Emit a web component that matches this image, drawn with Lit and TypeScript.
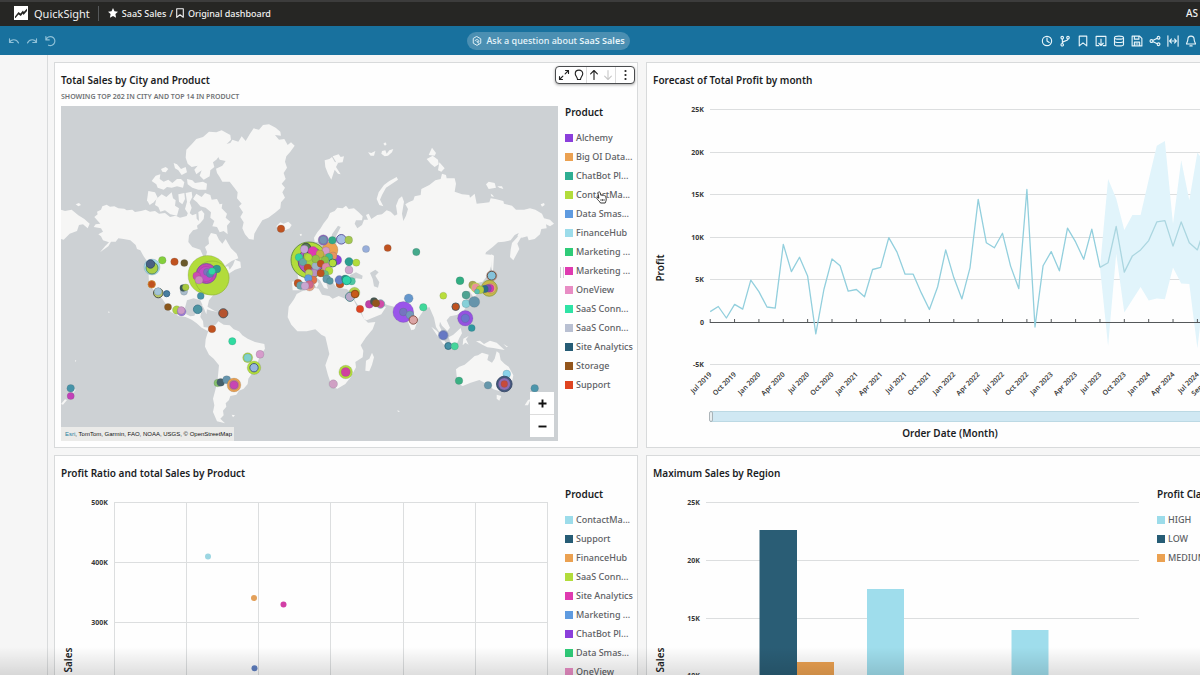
import { LitElement, html, svg, css } from "lit";
import { customElement, property } from "lit/decorators.js";

type LegendItem = [string, string];
type Dot = [number, number, number, string, string?];

const C = {
  purple: "#8b3fdb", orange: "#eba151", teal: "#2fae92", lime: "#b2dc3b", blue: "#5f9be0",
  sky: "#9cdcea", green: "#2fcb78", magenta: "#df3bb0", pink: "#e88dc4", mint: "#2fe3a5",
  grey: "#b9c0d2", navy: "#265c75", brown: "#93551b", red: "#df4420",
};

const PRODUCTS: LegendItem[] = [
  ["Alchemy", C.purple], ["Big OI Data...", C.orange], ["ChatBot Pl...", C.teal],
  ["ContactMa...", C.lime], ["Data Smas...", C.blue], ["FinanceHub", C.sky],
  ["Marketing ...", C.green], ["Marketing ...", C.magenta], ["OneView", C.pink],
  ["SaaS Conn...", C.mint], ["SaaS Conn...", C.grey], ["Site Analytics", C.navy],
  ["Storage", C.brown], ["Support", C.red],
];

const RATIO: LegendItem[] = [
  ["ContactMa...", C.sky], ["Support", C.navy], ["FinanceHub", C.orange],
  ["SaaS Conn...", C.lime], ["Site Analytics", C.magenta], ["Marketing ...", C.blue],
  ["ChatBot Pl...", C.purple], ["Data Smas...", C.green], ["OneView", C.pink],
];

const CLASSES: LegendItem[] = [["HIGH", C.sky], ["LOW", C.navy], ["MEDIUM", C.orange]];

const PROFIT = [
  1.3, 1.9, 0.55, 2.15, 1.6, 5, 3.65, 1.85, 1.7, 9.2, 6, 7.7, 5.5, -1.3, 3.9, 7.5, 6.7, 3.7, 3.9,
  3.05, 6.25, 6.5, 10, 8.3, 5.7, 5.7, 3.5, 1.55, 4.2, 8.55, 5.3, 2.8, 6.45, 14.5, 9.4, 8.8, 10.5,
  6.65, 4, 15.65, -0.5, 6.7, 8.35, 6.1, 11.1, 9.5, 7.45, 11, 6.5,
];
const FORECAST = [6.5, 7.05, 11.3, 5.95, 7.85, 8.55, 9.65, 11.85, 12, 9, 11.85, 9.4, 8.55, 11.5];
const UPPER = [6.5, 16.9, 14.6, 10.9, 12.65, 12.65, 16.8, 20.8, 21.35, 11.6, 19.1, 14.4, 20, 18.6];
const LOWER = [6.5, -2.75, 8.1, 1.2, 2.7, 4.2, 2.6, 2.85, 2.75, 6.5, 4.6, 4.55, -3, 5];

const RUST = "#c0521f";
const DOTS: Dot[] = [
  [152, 267, 8, "#a5dcec"], [152, 268, 6, "#a9cf45", "#4a7a60"], [150.5, 264, 4.2, "#4a6184", "#2f4565"],
  [162.3, 260.3, 3.8, "#84cf3c"], [174.5, 261.7, 3.8, RUST], [184.3, 263, 3.6, "#6b5a2a"],
  [207.5, 275, 19.5, "#b2dc3b"], [212, 278, 17, "#b2dc3b", "#95bb35"], [206.5, 273.5, 10, "#c445b4", "#6d4fa0"],
  [206, 274, 7.5, "#c34bc4"], [196.8, 276, 4, "#cc4db0"], [199, 280, 4, "#cf86c0"],
  [207, 272, 3.6, "#7d6fc0"], [210, 274, 3.6, "#4f8bb0"], [216.8, 269, 4, "#2f9a8c"], [212, 271.2, 3.5, "#2fd7a5"],
  [281, 228.7, 3.8, RUST], [151.7, 284.3, 3.7, RUST, "#c98a30"], [158.3, 293, 4.8, "#b8c96a", "#333"],
  [158, 291.5, 3.8, "#a3c4d8"], [166.7, 293.7, 3.1, "#4a7fa0", "#2f5d80"], [168, 307, 3.6, "#8a571c"],
  [176.7, 310, 4.2, "#b0d443"], [181.6, 311.6, 4.4, "#9a78d8"], [181.2, 310.4, 3.8, "#cd9ac8"],
  [184, 291.6, 3.6, "#a9bccb"], [183.2, 288, 3.4, "#3b5955"], [185.7, 287.3, 3.4, "#a7c93c"],
  [200.7, 296, 3.5, "#4593a8"], [197.7, 309.3, 4.3, "#4e95a3", "#38748a"], [223.3, 313.3, 4.6, "#b5532f", "#3e4c55"],
  [212, 329, 3.8, RUST], [232.3, 341.3, 3.7, "#2fdba0"], [260, 354.3, 4, "#d69bcb"],
  [247.7, 357.7, 5, "#b2dc3b"], [247.7, 357.7, 4, "#7fd0cc"], [254, 367.7, 6.8, "#b2dc3b"],
  [254, 367.7, 4.2, "#98b6e0", "#334b70"], [217.7, 383, 3.8, "#86c06b"], [220.7, 382.3, 3.9, "#45606b"],
  [226.7, 379.7, 4, "#6795ad"], [234, 385, 6.9, "#eba151"], [234, 385, 5, "#c88a90"], [234, 385, 4, "#c845b4"],
  [70.7, 388.3, 3.8, "#4693a8"], [70.7, 396, 3.6, "#c240b8"],
  [309, 260, 18, "#b2dc3b", "#55803c"], [311, 261, 13, "#b65ac0", "#4c4f66"], [313, 258, 10, "#a6d13f", "#557"],
  [330, 250, 8, "#eba151"], [306, 248, 4.8, "#557a55", "#334"], [304.3, 249.3, 4, "#c6a5d8"],
  [313, 251.5, 5, "#df3bb0"], [299, 257.3, 3.8, "#2fd3a0"], [303, 262, 3.8, "#64a9a5"], [316, 266, 4.2, "#9fb2c6"],
  [336.7, 260, 5, "#8b3fdb"], [333, 256, 4, "#e79460"], [326, 250.7, 3.8, "#d59bc9"], [320, 254, 4, "#c3b244"],
  [329, 257, 3.8, "#3dbd94"], [325, 260, 3.8, "#8bbf45"], [315.7, 259, 4, "#93c047"], [332.7, 263, 4, "#b2dc3b", "#2f5a66"],
  [308.3, 257.3, 3.8, "#b2dc3b"], [320.7, 263.7, 3.6, RUST], [307.7, 267.7, 3.8, RUST], [326, 267, 4, "#e08aa8"],
  [314, 273, 3.8, "#b792c0"], [309, 273, 3.8, "#bad25a"], [329, 270.7, 4, "#b2dc3b"], [325, 274, 3.6, "#6aba80"],
  [320.7, 273.3, 3.7, RUST], [313, 280, 4, "#df704a"], [308.3, 278.3, 3.8, "#5f9be0"], [298, 283.2, 4, RUST],
  [300.5, 285.5, 4, "#68a2a8"], [309.5, 286, 5, "#eba080"], [309.5, 284.6, 4, "#d0668a"], [305, 286, 4, "#c9a5d0"],
  [326.7, 279, 4, "#6499ac"], [330, 281, 3.4, "#5698a3"], [340, 284, 4, RUST], [339.3, 280, 4.4, "#687ec5"],
  [345, 278.5, 3.6, "#2a8d80"], [351.7, 281.3, 3.7, "#4fc7a2"], [346.7, 280.3, 4.4, "#2fd5aa", "#1c8f7f"],
  [323.3, 240, 5.2, "#9067c0"], [323.3, 240, 4, "#7694b3"], [332.3, 240.3, 3.8, "#31aa85"],
  [341.3, 239.3, 4.8, "#a7bfe4", "#4a3d90"], [348.7, 240, 3.9, "#a5c850"], [366, 249, 3.6, "#98aeda"],
  [387.7, 248, 3.6, RUST], [416.3, 252, 3.7, "#45aa8c"], [349, 261.7, 4.2, "#2a9d8f"], [356.3, 262.7, 3.6, "#b2dc3b"],
  [349, 270, 4, "#cfa6cc"], [354.5, 292.6, 5.4, "#b2d04a"], [350, 296.8, 4.6, "#b9a9c8", "#3d8080"],
  [355, 294, 3.8, "#c85a1a", "#804010"], [360, 309, 3.8, "#df4420"], [380.5, 304, 4.2, "#d04ba8", "#7aa"],
  [369.3, 304.3, 4, "#c040a8"], [374, 301.4, 3.8, "#46564f"], [376, 303.3, 3.8, "#93551b"],
  [403.3, 312, 10.4, "#9a55ea"], [403.3, 312, 3.9, "#7674bf"], [410, 315, 4, "#7398bb"], [408.7, 298.3, 4.4, "#6597cc"],
  [413.3, 320, 4.2, "#dba5a5", "#7b4033"], [423.3, 307.3, 3.8, "#40d89a"], [443.3, 295.7, 3.5, "#b9de3c"],
  [460, 280.7, 4, "#31ae82"], [491.7, 275.7, 5.3, "#e3a58a"], [491.7, 275.7, 4.4, "#85c2da", "#4a3b33"],
  [472.7, 285, 4, "#a8a850"], [475.8, 287.7, 4.6, "#e8939a", "#b2dc3b"], [489.3, 288.3, 8, "#c9b84a", "#8a9a3c"],
  [491, 288.3, 5, "#e8a870"], [490, 288.3, 4, "#d436b0"], [487.6, 288.3, 3.8, "#7d4bb8"], [484.6, 289, 3.8, "#2b6c86"],
  [480, 289.8, 4, "#b5cf42"], [477, 291.5, 2.6, "#57c0b0"], [466, 295, 4, "#4fa392"], [466, 303.7, 4, "#86d0d8"],
  [474.3, 301.9, 5.4, "#6694ab"], [455.7, 306.7, 3.8, RUST, "#3d5560"], [465.3, 318.3, 7.7, "#9552e0"],
  [465.3, 318.3, 4.2, "#6c74cc"], [471.7, 328, 3.5, "#2f97a0"], [443.3, 335.3, 5, "#93a2d2"],
  [443.3, 335.3, 4.2, "#6678c4"], [448.3, 346, 3.5, "#458fa5", "#2a6478"], [454.7, 346.3, 3.7, "#45d59b"],
  [345.7, 372, 6.8, "#b2dc3b"], [345.7, 372, 4.6, "#d0419f"], [333.3, 384, 4.2, "#d0a0c4"],
  [459, 380.7, 3.8, "#3ab083"], [488, 385.3, 3.8, "#6697ab"], [506.7, 374, 3.9, "#8ad2ea"],
  [504.3, 384, 7.8, "#44587f", "#2f4060"], [504.3, 384, 6, "#8d6cb4"], [504.3, 384, 3.4, "#c84a3c"],
  [534.7, 388.3, 3.8, "#4c95ab"],
];

/* Coastlines, grouped by map quarter; each quarter is shifted by its own translate. */
const LAND_NW = [
  "M118 350L128 342 126 334 138 328 142 318 155 313 165 319 178 318 190 324 208 325 215 330 232 328 240 335 258 332 272 328 285 334 300 332 312 340 330 338 345 350 362 346 375 352 395 347 400 335 412 345 424 340 425 355 432 362 430 335 440 330 448 340 446 356 436 368 426 376 428 386 414 390 402 405 400 425 412 440 436 448 444 466 453 467 456 455 450 440 462 430 460 412 468 398 484 402 492 418 502 430 512 416 520 430 528 444 545 460 550 474 530 482 516 492 506 500 520 498 524 508 534 494 540 478 556 484 558 502 540 508 528 516 500 535 482 575 462 600 456 625 454 642 446 622 436 600 416 594 396 600 390 622 394 642 406 648 418 646 424 632 440 630 436 650 444 662 446 680 462 682 458 692 440 682 424 668 410 658 392 650 372 648 346 634 332 610 322 596 306 580 290 562 282 545 280 510 290 508 284 494 266 468 256 450 246 446 242 434 226 420 206 416 190 414 182 424 168 424 160 438 135 456 150 438 162 426 144 420 138 408 130 402 144 394 138 384 116 380 122 372 136 370z",
  "M18 328L30 332 50 328 70 345 88 356 104 370 98 384 84 372 72 374 66 392 44 400 26 418 18 416z",
  "M62 312L72 308 78 314 70 318z",
  "M483 205L502 196 512 182 494 178 488 166 498 158 510 132 526 128 532 118 550 124 560 108 572 122 584 102 596 84 612 88 624 74 642 72 662 82 676 94 678 106 660 104 672 118 688 116 698 134 708 126 719 136 706 154 694 168 690 184 696 202 686 218 692 236 680 250 690 262 682 276 690 292 678 306 676 324 662 336 640 352 622 360 608 382 598 400 596 418 582 416 570 402 562 384 566 366 556 350 564 336 552 318 560 310 546 294 548 276 538 262 524 244 502 244 494 230 486 218z",
  "M392 172L394 148 410 132 424 116 444 110 462 94 484 96 500 90 526 104 528 118 512 134 516 146 498 160 484 178 474 186 478 200 466 210 464 228 446 238 434 226 440 210 424 222 418 208 428 196 410 200 398 190z",
  "M290 242L302 226 316 222 314 236 326 244 340 238 352 248 366 236 378 236 388 246 384 262 366 258 350 262 336 260 326 268 308 262 304 252z",
  "M356 188L366 192 378 206 392 200 396 216 380 224 370 210 360 204z",
  "M318 206L332 200 340 206 332 216 322 214z",
  "M280 272L300 276 308 292 296 306 284 314 276 300z",
  "M304 296L320 282 334 290 350 276 354 294 362 300 360 316 372 324 366 346 346 342 330 330 316 334 310 320 300 314z",
  "M370 282L388 278 390 296 382 312 372 304z",
  "M392 278L410 274 412 290 404 306 410 322 402 344 390 326 396 304z",
  "M396 236L412 240 420 248 444 244 456 250 454 268 430 268 412 262 398 252z",
  "M414 296L424 280 440 290 450 278 466 284 470 298 486 296 494 312 502 310 500 324 516 340 512 352 526 364 516 376 518 402 506 392 494 396 486 380 472 378 478 362 466 352 468 336 452 322 436 318 426 306z",
  "M664 378L676 366 686 370 700 364 710 374 704 384 690 390 674 388z",
  "M734 402l5 -2 2 5 -5 2z",
];
const LAND_NE = [
  "M42 412L52 396 62 384 70 370 84 352 90 338 104 332 112 322 128 324 138 316 146 326 162 324 176 336 188 348 186 360 168 360 164 370 172 384 186 374 192 358 204 358 198 344 206 340 214 356 232 344 246 342 260 330 272 334 284 346 292 342 288 316 296 296 306 288 312 304 306 340 310 362 318 346 324 326 316 312 326 306 340 300 344 288 362 284 364 266 388 254 406 240 422 236 426 220 438 224 440 234 464 234 468 250 464 274 486 282 508 284 510 292 524 280 530 310 550 308 568 306 572 294 586 296 610 302 612 310 636 316 648 328 672 328 690 324 706 328 726 340 732 354 750 358 762 370 750 378 738 372 740 384 724 386 720 402 704 416 686 420 682 408 666 412 652 408 656 398 644 404 632 420 612 424 594 426 578 440 558 456 556 462 578 464 574 494 566 520 548 544 532 548 520 560 530 584 520 590 508 572 494 572 486 582 496 594 504 612 490 632 470 644 450 648 440 660 450 682 442 692 426 676 420 664 418 676 432 706 426 708 408 680 402 652 388 620 372 628 356 652 344 686 334 690 322 660 312 632 294 622 262 614 240 604 250 616 258 620 244 642 200 660 192 656 180 624 160 594 158 580 140 566 110 562 96 542 76 538 84 566 72 562 60 540 40 524 56 550 50 562 34 544 22 546 0 570 -22 570 -24 544 -4 540 -8 520 0 504 20 488 36 478 48 462 46 448 56 446 72 458 96 454 100 440 112 426 130 424 140 414 116 418 108 408 122 380 114 376 96 402 92 424 80 440 72 440 64 424 44 424z",
  "M230 296L236 276 252 254 268 242 290 230 294 238 276 250 258 262 246 284 240 298 250 318 238 314z",
  "M74 180L88 176 96 170 104 184 114 188 108 200 122 222 114 220 104 208 94 238 84 220 76 200zM98 168L116 162 122 170 132 168 128 186 110 188z",
  "M204 156L214 158 226 152 222 166 212 166zM246 152L256 150 260 160 268 150 280 146 276 156 264 166 254 168 244 160zM250 130l6 -4 4 6 -5 4z",
  "M386 164L396 142 408 158 404 166zM380 176L398 166 414 178 416 192 404 200 392 190zM418 186L434 204 424 214 414 210z",
  "M558 252L566 244 584 248 588 262 566 266zM592 258L606 258 610 266 598 262zM572 280l6 4 4 6 -8 -2zM722 312l10 -4 2 6 -8 5z",
  "M636 428L658 404 664 410 652 430 658 446 640 480 630 470 632 448z",
  "M574 462L582 466 580 500 578 520 574 500z",
];
const SEA_NE = [
  "M150 524L168 516 188 526 186 536 168 534 158 544 148 540z",
  "M210 518L226 508 236 516 226 526 238 546 234 562 222 558 218 536z",
];
const LAND_SW = [
  "M452 222L460 196 470 180 482 178 490 168 506 178 524 180 536 192 552 198 562 210 578 220 600 230 628 236 630 250 616 270 608 290 606 314 590 326 580 340 578 356 566 370 552 376 544 388 526 392 522 404 512 414 514 424 504 436 506 450 496 460 510 474 486 468 474 440 478 420 474 400 482 370 488 340 492 300 476 280 462 268 450 244z",
  "M440 120L454 122 478 136 490 140 470 136 450 130zM494 140L510 142 512 150 496 150z",
  "M18 416L30 402 36 404 24 418zM56 366l6 8 -8 10 -2 -8zM530 448l10 2 -6 6z",
  "M60 284l4 2 -3 4zM160 138l5 3 -5 2z",
];
const LAND_SE = [
  "M6 78L-10 86 -18 102 -34 124 -37 156 -26 178 -8 198 20 198 46 192 64 208 76 214 82 240 88 266 76 300 84 330 96 364 112 370 136 356 152 336 168 306 166 290 188 276 190 256 182 240 198 216 218 192 226 170 204 172 192 160 182 144 170 122 158 98 136 100 116 92 98 100 88 92 66 88 56 70 34 66 18 74z",
  "M198 286L208 280 216 262 222 276 216 298 208 318 196 316z",
  "M468 312L470 332 476 356 488 362 512 352 538 344 556 354 568 362 580 372 600 378 616 370 636 350 640 330 626 304 614 296 602 284 598 264 590 258 584 280 576 292 562 284 566 268 546 262 534 270 524 272 508 286 494 298 478 304z",
  "M590 388L604 392 598 406 590 400z",
  "M446 216L460 208 482 188 486 204 478 218 470 236 452 234z",
  "M394 184L410 196 424 212 442 240 430 236 410 208zM438 244L466 250 476 252 456 252z",
  "M490 220L506 212 498 222 506 238 496 232 488 240zM528 228L540 226 552 236 570 226 590 232 614 254 600 252 580 248 562 246 550 240z",
  "M674 420L684 404 692 402 684 420zM690 394L702 388 706 396 694 402z",
  "M480 140l8 2 6 20 8 16 -6 2 -10 -20zM336 176l8 10 -4 8 -6 -6z",
  "M556 50L572 44 582 50 590 70 578 84 560 84 550 78 566 72 572 62z",
  "M610 236l14 8 -4 2zM636 250l10 8zM666 300l6 4zM292 435l8 3 -6 2z",
];

const NAV: [string, string][] = [
  ["Schedule", "M8 4V8l3 2M14.2 8A6.2 6.2 0 1 1 1.8 8a6.2 6.2 0 0 1 12.4 0z"],
  ["Branch", "M4.5 5.5v6M12 5.5c0 3-7 1.5-7.500 5M6 3.5a1.7 1.7 0 1 1-3.4 0 1.7 1.7 0 0 1 3.4 0zM6 13a1.7 1.7 0 1 1-3.4 0A1.7 1.7 0 0 1 6 13zM13.7 3.5a1.7 1.7 0 1 1-3.4 0 1.7 1.7 0 0 1 3.4 0z"],
  ["Bookmarks", "M3 1.5h10v13L8 10.5l-5 4z"],
  ["Export", "M5 14.2H1.5V1.8h13v12.4H11M8 5.5v8.5M5 11l3 3 3-3"],
  ["Data", "M14 3.5c0 1.2-2.7 2-6 2s-6-.8-6-2 2.7-2 6-2 6 .8 6 2zM2 3.5v9c0 1.2 2.7 2 6 2s6-.8 6-2v-9M2 8c0 1.2 2.7 2 6 2s6-.8 6-2"],
  ["Save", "M1.5 1.5h10l3 3v10h-13zM4.5 1.5v4h6v-4M4.5 14.5v-5h7v5M6.5 12h3"],
  ["Share", "M5 7.3l6-3M5 8.7l6 3M5.2 8a1.9 1.9 0 1 1-3.8 0 1.9 1.9 0 0 1 3.8 0zM14.5 3.7a1.8 1.8 0 1 1-3.6 0 1.8 1.8 0 0 1 3.6 0zM14.5 12.3a1.8 1.8 0 1 1-3.6 0 1.8 1.8 0 0 1 3.6 0z"],
  ["Fit width", "M1.2 1v14M14.8 1v14M3.5 8h9M6 5.3L3.5 8 6 10.7M10 5.3L12.5 8 10 10.7"],
  ["Alerts", "M8 1.5c-3 0-4.2 2-4.2 4.5 0 3-1.8 4.5-1.8 6h12c0-1.5-1.8-3-1.8-6 0-2.5-1.2-4.5-4.2-4.5zM6.5 14.5h3"],
];

const tokens = css`
  :host { display: block; box-sizing: border-box; font-family: "Noto Sans", "Open Sans", sans-serif; }
  *, *::before, *::after { box-sizing: border-box; }
  button { font: inherit; color: inherit; background: none; border: 0; margin: 0; padding: 0; display: grid; place-items: center; cursor: pointer; }
  svg { display: block; }
`;

@customElement("qs-legend")
class QsLegend extends LitElement {
  @property() heading = "";
  @property({ attribute: false }) items: LegendItem[] = [];
  static styles = [tokens, css`
    :host { width: 66px; flex: none; white-space: nowrap; }
    h3 { margin: 0 0 8px; font-size: 10px; line-height: 16px; font-weight: 600; color: #1b1d1f; }
    ul { margin: 0; padding: 0; list-style: none; }
    li { display: flex; align-items: center; gap: 3px; height: 19px; font-size: 9px; font-weight: 500; color: #5d6064; }
    .swatch { width: 8px; height: 8px; flex: none; }
  `];
  render() {
    return html`<h3>${this.heading}</h3>
      <ul>${this.items.map(([name, color]) => html`<li><span class="swatch" style="background:${color}"></span>${name}</li>`)}</ul>`;
  }
}

@customElement("qs-card")
class QsCard extends LitElement {
  @property() heading = "";
  @property() note = "";
  static styles = [tokens, css`
    :host { background: #fefefe; border: 1px solid #d8dadb; padding: 9px 6px 6px; position: relative; min-width: 0; height: 386px; overflow: hidden; }
    h2 { margin: 0; font-size: 10px; line-height: 16px; font-weight: 600; color: #1b1d1f; white-space: nowrap; }
    p { margin: 3px 0 1px; font-size: 7px; line-height: 12px; font-weight: 600; color: #6f7275; }
  `];
  render() {
    return html`<h2>${this.heading}</h2>${this.note ? html`<p>${this.note}</p>` : ""}<slot></slot>`;
  }
}

@customElement("app-root")
class AppRoot extends LitElement {
  static styles = [tokens, css`
    :host { height: 100vh; overflow: hidden; position: relative; background: #f6f6f6; display: flex; flex-direction: column; }
    .top { height: 26px; flex: none; background: #262624; box-shadow: inset 0 2px #3c3c3c; color: #f2f2f2; display: flex; align-items: center; padding: 0 2px 0 14px; font-size: 9px; font-weight: 500; white-space: nowrap; }
    .brand { font-size: 11px; font-weight: 400; margin-left: 6px; }
    .rule { width: 1px; height: 15px; background: #55585a; margin: 0 9px 0 8px; }
    .crumb { display: flex; align-items: center; gap: 4px; color: inherit; text-decoration: none; }
    .slash { margin: 0 3px; }
    .account { margin-left: auto; font-size: 10px; }
    .bar { height: 29px; flex: none; background: #18719e; display: flex; align-items: center; justify-content: space-between; padding: 0 3px 0 8px; color: #e8f5fa; }
    .history { display: flex; gap: 6px; color: #8fc1d8; }
    .ask { display: flex; align-items: center; gap: 4px; height: 18px; border-radius: 9px; padding: 0 5px; background: #4b8fb2; font-size: 9px; font-weight: 500; white-space: nowrap; }
    .ask b { font-weight: 600; }
    .actions { display: flex; gap: 6px; }
    .stroke { fill: none; stroke: currentColor; stroke-width: 1.5; stroke-linecap: round; stroke-linejoin: round; }
    .page { flex: 1; min-height: 0; display: flex; padding-left: 47px; }
    .sheet { flex: 1; min-width: 0; margin-right: -36px; border-left: 1px solid #d9dbdc; padding: 7px 6px; display: grid; grid-template-columns: 1fr 1fr; gap: 7px 8px; align-content: start; }
    .split { display: flex; gap: 7px; position: relative; }
    .plot { flex: 1; min-width: 0; }
    .plot svg, .wide { width: 100%; height: auto; }
    .lower { padding-top: 5px; }
    .map { flex: 1; min-width: 0; position: relative; padding-top: 2px; }
    .map > svg { width: 100%; height: auto; }
    .credit { position: absolute; left: 0; bottom: 0; background: #ebebe9; font: 6px/14px "Liberation Sans", sans-serif; color: #111; padding: 0 2px 0 4px; white-space: nowrap; }
    .credit a { color: #2a7f9f; text-decoration: none; }
    .zoom { position: absolute; right: 4px; bottom: 4px; width: 24px; display: grid; gap: 1px; background: #ddd; border-radius: 2px; }
    .zoom button { height: 22px; background: #fff; color: #111; }
    .grip { position: absolute; right: 67px; top: 163px; width: 4px; height: 11px; border: solid #d0d2d4; border-width: 0 1px; }
    .menu { position: absolute; right: 2px; top: 3px; height: 18px; width: 80px; display: grid; grid-template-columns: 1fr 1fr 1fr 1fr 19px; align-items: center; background: #fff; border: 1px solid #4a4c4e; border-radius: 4px; box-shadow: 0 1px 3px #0005; color: #222; padding-left: 1px; }
    .menu .sep { border-left: 1px solid #dcdcdc; height: 16px; }
    .menu .off { color: #c8c8c8; }
    .hand { position: absolute; right: 24px; top: 87px; }
    .fade { position: absolute; left: 0; right: 0; bottom: 0; height: 28px; background: linear-gradient(#0000, #00000020); pointer-events: none; }
    .tick { font-size: 7px; font-weight: 700; fill: #3a3a3a; text-anchor: end; }
    .date { font-size: 7px; font-weight: 600; fill: #3a3a3a; text-anchor: end; }
    .axis { font-size: 10px; font-weight: 600; fill: #1b1d1f; text-anchor: middle; }
    .grid { stroke: #dcdedf; stroke-width: 1; fill: none; }
    .base { stroke: #55585a; stroke-width: 1; fill: none; }
    .series { fill: none; stroke: #92cfdd; stroke-width: 1.3; stroke-linejoin: round; }
    .ahead { stroke: #abd6e0; }
    .range { fill: #e1f4fb; }
    .land { fill: #f6f6f5; }
    .sea { fill: #cdd1d4; }
  `];

  private map() {
    const quarter = (x: number, y: number, land: string[]) =>
      svg`<g class="land" transform="translate(${x} ${y})">${land.map((d) => svg`<path d=${d} />`)}</g>`;
    return html`<svg viewBox="0 0 1491 1005" role="img" aria-label="Sales by city">
      <rect class="sea" width="1491" height="1005" />
      ${quarter(-18, -17, LAND_NW)}${quarter(717, -17, LAND_NE)}
      <g class="sea" transform="translate(717 -17)">${SEA_NE.map((d) => svg`<path d=${d} />`)}</g>
      ${quarter(-18, 478, LAND_SW)}${quarter(717, 478, LAND_SE)}
      <g transform="scale(3) translate(-61 -106)">
        ${DOTS.map(([x, y, r, fill, ring]) => svg`<circle cx=${x} cy=${y} r=${r} fill=${fill} stroke=${ring ?? "#4b555c"} stroke-opacity=${ring ? 1 : 0.35} stroke-width=${ring ? 0.8 : 0.5} />`)}
      </g>
    </svg>`;
  }

  private forecast() {
    const x = (i: number) => 710.2 + i * 8.12;
    const y = (v: number) => 322.7 - v * 8.51;
    const at = (values: number[], from: number) => values.map((v, i) => `${x(i + from).toFixed(1)},${y(v).toFixed(1)}`);
    const months = ["Jul", "Oct", "Jan", "Apr"];
    const dates = Array.from({ length: 21 }, (_, i) => `${months[i % 4]} ${2019 + Math.floor((i + 2) / 4)}`);
    return html`<svg class="wide" viewBox="653 88 570 353" role="img" aria-label="Profit by month">
      ${[25, 20, 15, 10, 5, -5].map((v) => svg`<path class="grid" d="M710 ${Math.round(y(v)) - 0.5}H1223" />`)}
      <polygon class="range" points=${[...at(UPPER, 48), ...at(LOWER, 48).reverse()].join(" ")} />
      <path class="base" d="M710 322.5H1223" />
      ${dates.map((_, i) => svg`<path class="base" d="M${x(i * 3)} 319V323" />`)}
      <polyline class="series" points=${at(PROFIT, 0).join(" ")} />
      <polyline class="series ahead" points=${at(FORECAST, 48).join(" ")} />
      ${[25, 20, 15, 10, 5, 0, -5].map((v) => svg`<text class="tick" x="704" y=${Math.round(y(v)) + 2}>${v ? `${v}K` : "0"}</text>`)}
      ${dates.map((d, i) => svg`<text class="date" transform="translate(${x(i * 3) + 2} 375) rotate(-45)">${d}</text>`)}
      <text class="date" transform="translate(${x(62) + 2} 375) rotate(-45)">Sep 2024</text>
      <text class="axis" transform="translate(664 268) rotate(-90)">Profit</text>
      <rect x="710" y="411" width="513" height="11" fill="#d0e8f3" />
      <path d="M710 411.5H1223M710 421.5H1223" stroke="#bcd9e4" />
      <rect x="709.5" y="411.5" width="3" height="10" rx="1.5" fill="#e8eef0" stroke="#9aa5aa" stroke-width=".8" />
      <text class="axis" x="950" y="437">Order Date (Month)</text>
    </svg>`;
  }

  private scatter() {
    return html`<svg viewBox="61 486 497 330" role="img" aria-label="Profit ratio and sales">
      ${[502, 562, 622, 682, 742].map((v) => svg`<path class="grid" d="M114 ${v + 0.5}H548" />`)}
      ${[114, 186, 258, 330, 403, 475, 547].map((v) => svg`<path class="grid" d="M${v + 0.5} 502V800" />`)}
      ${[["500K", 505], ["400K", 565], ["300K", 625]].map(([t, v]) => svg`<text class="tick" x="108" y=${v}>${t}</text>`)}
      <circle cx="208" cy="556.5" r="3" fill="#9cd6e2" /><circle cx="254" cy="598" r="3" fill="#e3a05a" />
      <circle cx="283.5" cy="604.5" r="3" fill="#d23fa6" /><circle cx="254.5" cy="668.3" r="3" fill="#5f7fc0" />
      <text class="axis" transform="translate(72 660) rotate(-90)">Sales</text>
    </svg>`;
  }

  private bars() {
    return html`<svg viewBox="653 486 497 330" role="img" aria-label="Maximum sales by region">
      ${[502, 560, 618, 675].map((v) => svg`<path class="grid" d="M706 ${v + 0.5}H1139" />`)}
      ${[["25K", 505], ["20K", 563], ["15K", 621], ["10K", 678]].map(([t, v]) => svg`<text class="tick" x="700" y=${v}>${t}</text>`)}
      <rect x="759.5" y="530" width="37.5" height="290" fill="#2a5d75" />
      <rect x="797" y="662" width="37" height="158" fill="#eba151" />
      <rect x="867" y="589" width="37" height="231" fill="#9fddec" />
      <rect x="1011.5" y="630" width="37" height="190" fill="#9fddec" />
      <text class="axis" transform="translate(664 660) rotate(-90)">Sales</text>
    </svg>`;
  }

  render() {
    const icon = (d: string, size = 12) => html`<svg class="stroke" width=${size} height=${size} viewBox="0 0 16 16" aria-hidden="true"><path d=${d} /></svg>`;
    return html`
      <header class="top">
        <svg width="14" height="14" viewBox="0 0 14 14" aria-hidden="true"><path fill="#fff" d="M0 0h14v14H0z" /><path fill="#262624" d="M1 10.500L4.500 6l2 1.500L9 4.500l.8 1.500L13 2.500v2.500L9.500 9 8.800 7.500 6.800 10 4.500 8.500 1.500 12H1z" /></svg>
        <span class="brand">QuickSight</span><span class="rule"></span>
        <a class="crumb" href="#sales"><svg width="10" height="10" viewBox="0 0 10 10" aria-hidden="true"><path fill="#fff" d="M5 0l1.5 3.3 3.5.4-2.6 2.4.7 3.6L5 7.9 1.9 9.7l.7-3.6L0 3.7l3.5-.4z" /></svg>SaaS Sales</a>
        <span class="slash">/</span>
        <a class="crumb" href="#original"><svg class="stroke" width="8" height="10" viewBox="0 0 8 10" aria-hidden="true"><path stroke-width="1.1" d="M.7.7h6.6v8.600L4 6.700.7 9.300z" /></svg>Original dashboard</a>
        <span class="account">AS</span>
      </header>
      <nav class="bar">
        <div class="history">
          <button aria-label="Undo">${icon("M2 5v5h5M2 10C4 5.5 11 4.5 14 10.5")}</button>
          <button aria-label="Redo">${icon("M14 5v5H9M14 10C12 5.5 5 4.5 2 10.5")}</button>
          <button aria-label="Reset">${icon("M2.5 2v4.5H7M2.8 6.3A6 6 0 1 1 6 13.6")}</button>
        </div>
        <button class="ask">
          ${icon("M8 1l6 3.5v7L8 15l-6-3.500v-7zM5 7.5C5 5 11 5 11 8.5c0 2-3 1.5-3 0L11 12", 10)}
          <span>Ask a question about <b>SaaS Sales</b></span>
        </button>
        <div class="actions">${NAV.map(([name, d]) => html`<button aria-label=${name}>${icon(d)}</button>`)}</div>
      </nav>
      <main class="page"><div class="sheet">
        <qs-card heading="Total Sales by City and Product" note="SHOWING TOP 262 IN CITY AND TOP 14 IN PRODUCT">
          <div class="menu">
            <button aria-label="Maximize">${icon("M9.5 6.5L14 2M10 2h4v4M6.5 9.5L2 14M2 10v4h4")}</button>
            <button aria-label="Insights">${icon("M8 1.5c-3 0-5 2-5 4.8 0 3 3 4.5 3 7.7h4c0-3.2 3-4.7 3-7.7 0-2.8-2-4.8-5-4.8z")}</button>
            <button class="sep" aria-label="Drill up">${icon("M8 14V2M3.5 6.5L8 2l4.5 4.5")}</button>
            <button class="off" aria-label="Drill down" disabled>${icon("M8 2v12M3.5 9.5L8 14l4.5-4.5")}</button>
            <button class="sep" aria-label="More"><svg width="3" height="12" viewBox="0 0 3 12" fill="currentColor" aria-hidden="true"><circle cx="1.5" cy="2" r="1.1" /><circle cx="1.5" cy="6" r="1.1" /><circle cx="1.5" cy="10" r="1.1" /></svg></button>
          </div>
          <div class="split">
            <div class="map">${this.map()}
              <div class="credit"><a href="#esri">Esri</a>, TomTom, Garmin, FAO, NOAA, USGS, © OpenStreetMap</div>
              <div class="zoom">
                <button aria-label="Zoom in"><svg width="9" height="9" viewBox="0 0 9 9"><path d="M4.5.5v8M.5 4.5h8" stroke="#111" stroke-width="1.9" /></svg></button>
                <button aria-label="Zoom out"><svg width="9" height="9" viewBox="0 0 9 9"><path d="M.5 4.5h8" stroke="#111" stroke-width="1.9" /></svg></button>
              </div>
            </div>
            <span class="grip"></span>
            <qs-legend heading="Product" .items=${PRODUCTS}></qs-legend>
            <svg class="hand" width="11" height="13" viewBox="0 0 11 13" aria-hidden="true"><path fill="#fff" stroke="#222" stroke-width=".9" stroke-linejoin="round" d="M2.5 1c.8-.5 1.5 0 1.7.8L5 4.5c.4-.6 1.3-.6 1.6 0 .5-.5 1.3-.3 1.6.2.7-.3 1.5.1 1.6.8L10.2 8c.2 1.8-.7 2.7-1 4H4.5C4 10.5 1.5 9 .8 7.5c-.3-.8.6-1.2 1.2-.8l.9.6L2 2.3C1.9 1.7 2 1.3 2.5 1z" /><path stroke="#222" stroke-width=".7" d="M5 8v2M6.5 8v2M8 8v2" /></svg>
          </div>
        </qs-card>
        <qs-card heading="Forecast of Total Profit by month">${this.forecast()}</qs-card>
        <qs-card heading="Profit Ratio and total Sales by Product">
          <div class="split lower"><div class="plot">${this.scatter()}</div><qs-legend heading="Product" .items=${RATIO}></qs-legend></div>
        </qs-card>
        <qs-card heading="Maximum Sales by Region">
          <div class="split lower"><div class="plot">${this.bars()}</div><qs-legend heading="Profit Class" .items=${CLASSES}></qs-legend></div>
        </qs-card>
      </div></main>
      <div class="fade"></div>`;
  }
}
